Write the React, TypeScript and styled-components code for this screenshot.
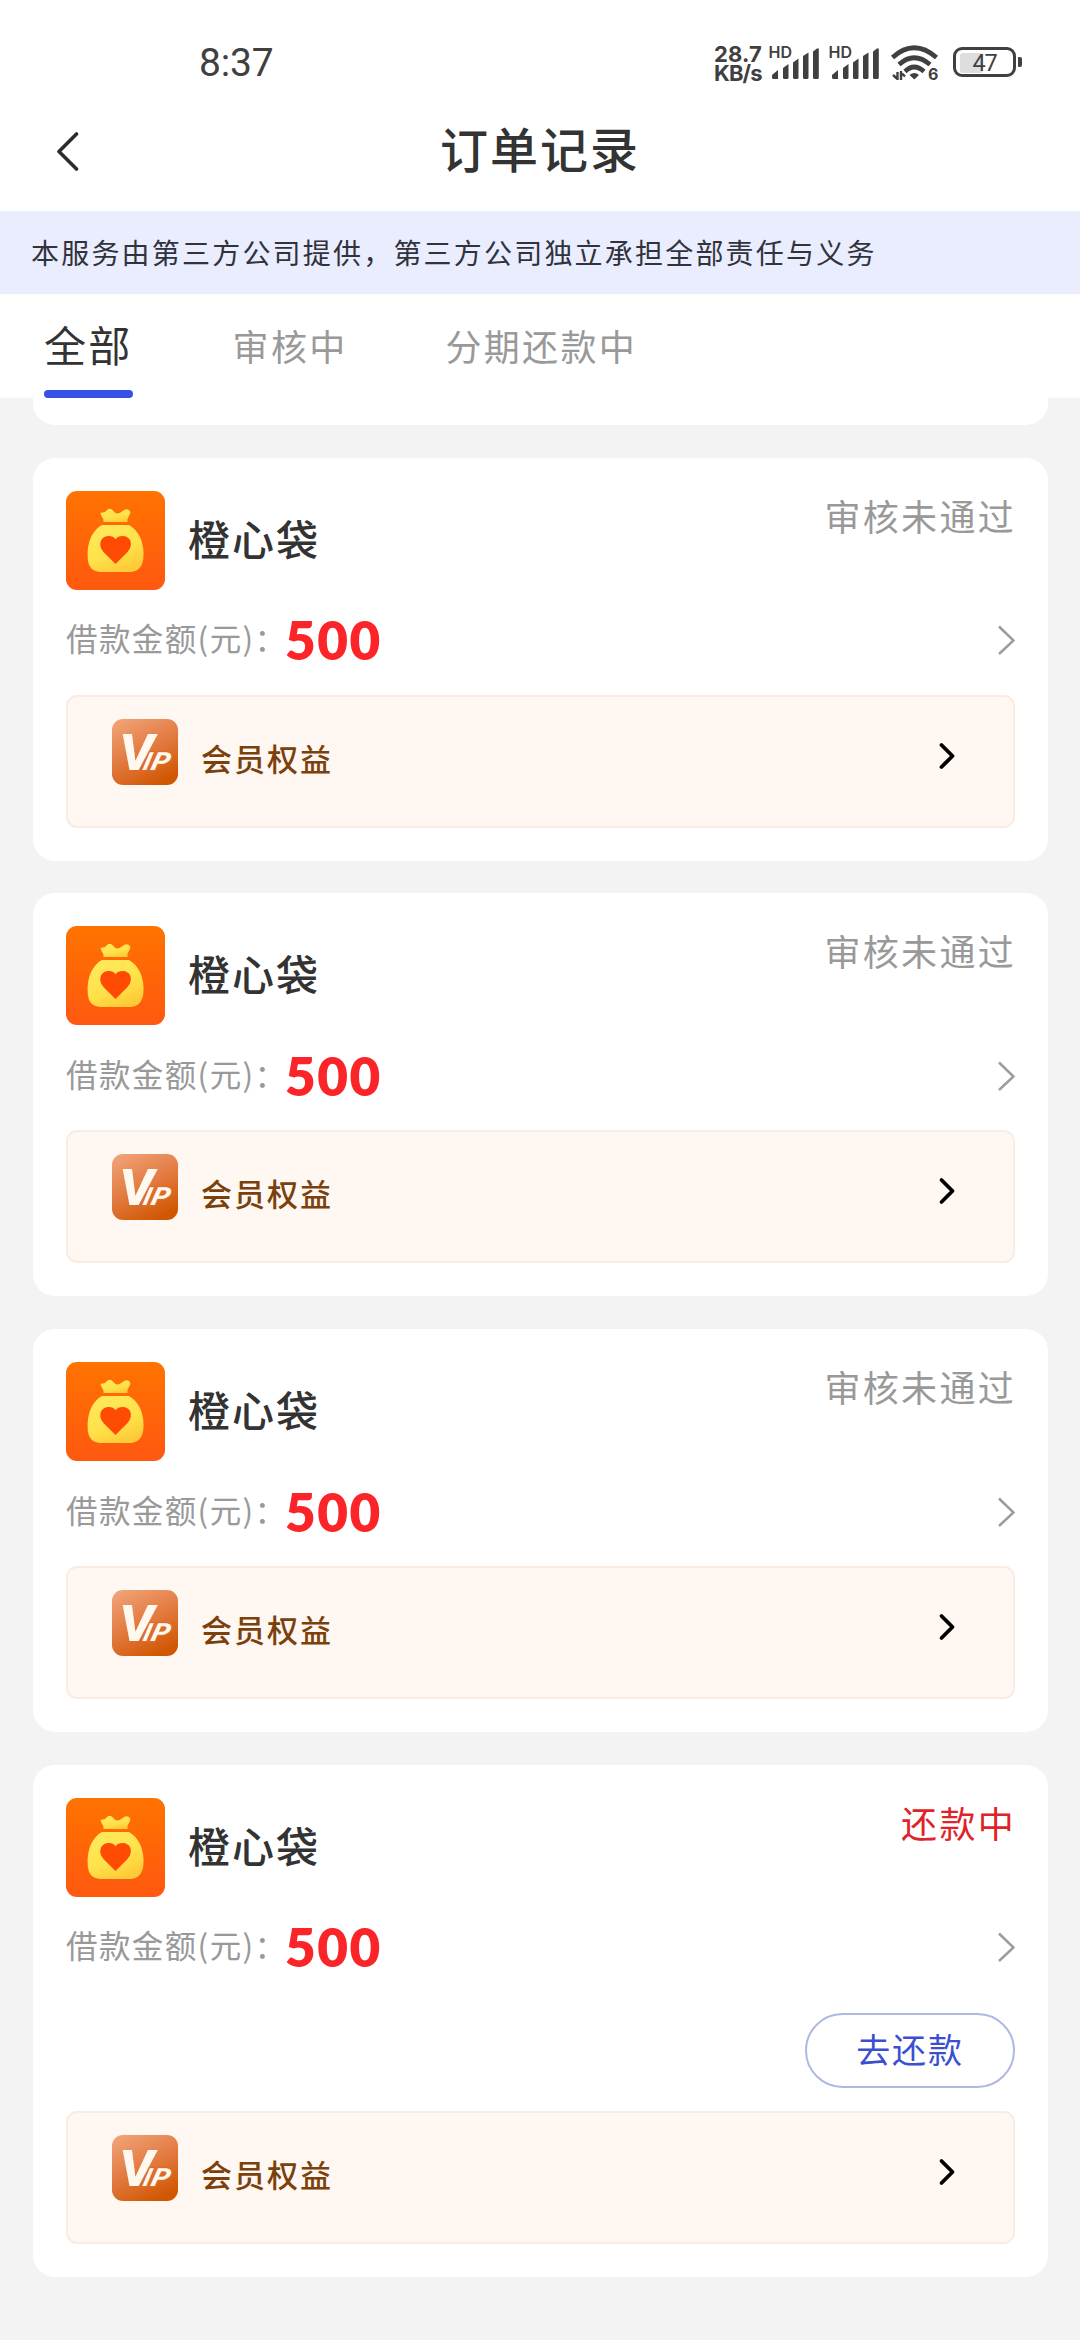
import React from "react";
import styled, { createGlobalStyle } from "styled-components";

const GlobalStyle = createGlobalStyle`
  * { box-sizing: border-box; }
  body {
    margin: 0;
    background: #f3f3f3;
    font-family: "Noto Sans CJK SC", "Noto Sans", sans-serif;
    color: #333;
  }
`;

const Page = styled.div`
  width: 1080px;
  height: 2340px;
  overflow: hidden;
  display: flex;
  flex-direction: column;
  background: #f3f3f3;
`;

const StatusBar = styled.div`
  height: 100px;
  padding: 24px 58px 0 199px;
  display: flex;
  align-items: center;
  justify-content: space-between;
  background: #fff;
  color: #404040;
`;

const Clock = styled.span`
  padding-top: 2px;
  font: 400 39px/46px Roboto, sans-serif;
  letter-spacing: -0.2px;
`;

const Indicators = styled.div`
  display: flex;
  align-items: center;
`;

const NetSpeed = styled.div`
  width: 55px;
  padding-top: 3px;
  font: 700 22px/19px Inter, sans-serif;
  white-space: nowrap;
`;

const SpeedLine = styled.div<{ $spacing: number }>`
  letter-spacing: ${(p) => p.$spacing}px;
`;

const Signal = styled.svg`
  width: 60px;
  height: 36px;
  overflow: visible;
`;

const Wifi = styled.svg`
  width: 50px;
  height: 36px;
  margin-left: 2px;
  overflow: visible;
`;

const Battery = styled.div`
  display: flex;
  align-items: center;
  margin-left: 12px;
`;

const BatteryShell = styled.div`
  width: 63px;
  height: 30px;
  border: 3px solid #404040;
  border-radius: 9px;
  padding: 2.5px 4px;
  display: grid;
`;

const BatteryCharge = styled.div`
  grid-area: 1 / 1;
  width: 23px;
  background: #dedede;
  border-radius: 3px;
`;

const BatteryText = styled.span`
  grid-area: 1 / 1;
  text-align: center;
  font: 400 23.5px/20px Roboto, sans-serif;
  letter-spacing: -1.2px;
`;

const BatteryNub = styled.div`
  width: 4px;
  height: 10px;
  margin-left: 2px;
  border-radius: 1px 2px 2px 1px;
  background: #404040;
`;

const NavBar = styled.header`
  height: 111px;
  padding: 0 54px 10px;
  display: grid;
  grid-template-columns: 80px 1fr 80px;
  align-items: center;
  background: #fff;
`;

const BackIcon = styled.svg`
  width: 28px;
  height: 40px;
`;

const NavTitle = styled.h1`
  margin: 0;
  padding-bottom: 8px;
  text-align: center;
  font-size: 48px;
  font-weight: 500;
  line-height: 60px;
  letter-spacing: 2px;
`;

const Notice = styled.div`
  height: 83px;
  padding: 0 31px;
  font-size: 28px;
  line-height: 82px;
  letter-spacing: 2.2px;
  white-space: nowrap;
  color: #30323c;
  background: #e9edfd;
`;

const Tabs = styled.nav`
  height: 104px;
  padding-left: 44px;
  display: flex;
  background: #fff;
`;

const Tab = styled.div<{ $active?: boolean }>`
  display: flex;
  flex-direction: column;
  justify-content: space-between;
  margin-right: ${(p) => (p.$active ? 100 : 98)}px;
  font-size: ${(p) => (p.$active ? 42 : 36)}px;
  line-height: ${(p) => (p.$active ? 99 : 102)}px;
  letter-spacing: 2.3px;
  color: ${(p) => (p.$active ? "#333" : "#999")};
  white-space: nowrap;
`;

const TabLabel = styled.span`
  height: 96px;
`;

const TabLine = styled.span`
  height: 8px;
  border-radius: 4px;
  background: #3551e6;
`;

const List = styled.main`
  padding: 0 32px 0 33px;
  display: flex;
  flex-direction: column;
  gap: 32.7px;
`;

const ScrolledCard = styled.div`
  height: 27px;
  border-radius: 0 0 22px 22px;
  background: #fff;
`;

const Card = styled.section`
  padding: 33px;
  border-radius: 22px;
  background: #fff;
  display: flex;
  flex-direction: column;
`;

const CardHead = styled.div`
  height: 99px;
  display: flex;
  align-items: center;
`;

const ProductLogo = styled.svg`
  width: 99px;
  height: 99px;
`;

const ProductName = styled.h2`
  margin: 0;
  padding: 0 0 5px 23px;
  flex: 1;
  font-size: 42px;
  font-weight: 500;
  line-height: 60px;
  letter-spacing: 2px;
`;

const Status = styled.span<{ $active?: boolean }>`
  align-self: flex-start;
  font-size: 36px;
  line-height: 48px;
  letter-spacing: 2.3px;
  margin-right: -1px;
  color: ${(p) => (p.$active ? "#e02229" : "#999")};
`;

const AmountRow = styled.div`
  height: 105px;
  padding-bottom: 4px;
  display: flex;
  align-items: center;
`;

const AmountLabel = styled.span`
  padding-bottom: 6px;
  font-size: 31.5px;
  line-height: 40px;
  letter-spacing: 1.4px;
  color: #999;
  width: 219px;
  white-space: nowrap;
`;

const Amount = styled.span`
  flex: 1;
  font: 800 53px/60px Lato, sans-serif;
  letter-spacing: 1.5px;
  color: #fb2428;
`;

const RowArrow = styled.svg`
  width: 18px;
  height: 30px;
`;

const Actions = styled.div`
  height: 109px;
  padding-top: 11px;
  display: flex;
  justify-content: flex-end;
  align-items: flex-start;
`;

const PayButton = styled.button`
  width: 210px;
  height: 75px;
  padding: 0 0 4px;
  border: 2px solid #aeb8e0;
  border-radius: 38px;
  background: #fff;
  color: #3a50cf;
  font: inherit;
  font-size: 34px;
  letter-spacing: 1.8px;
`;

const VipPanel = styled.div`
  height: 133px;
  padding: 22px 56px 0 44px;
  display: flex;
  align-items: flex-start;
  border: 2px solid #fbece3;
  border-radius: 11px;
  background: #fff7f1;
`;

const VipLogo = styled.svg`
  width: 66px;
  height: 66px;
`;

const VipLabel = styled.span`
  flex: 1;
  padding-left: 23px;
  font-size: 31px;
  font-weight: 500;
  line-height: 77px;
  letter-spacing: 2px;
  color: #7b410c;
`;

const VipArrow = styled.svg`
  width: 20px;
  height: 30px;
  margin-top: 22px;
`;

function SignalBars() {
  return (
    <Signal viewBox="0 0 60 36">
      <text x="-0.5" y="13.500" fontFamily="Inter" fontSize="16" fontWeight="600" fill="#404040">HD</text>
      <g fill="#404040">
        <path d="M3 33v-2l6-5v9H4q-1 0-1-2z" />
        <path d="M14 24l5.500-4v13.500q0 1.500-1.500 1.500h-2.500q-1.500 0-1.500-1.500z" />
        <path d="M24 18.500l5.500-4v19q0 1.500-1.500 1.500h-2.500q-1.500 0-1.500-1.500z" />
        <path d="M34 12l5.500-3.500v25q0 1.500-1.500 1.500h-2.500q-1.500 0-1.500-1.500z" />
        <path d="M44 7.500l4-3q1.800-1 1.800 1v28q0 1.500-1.500 1.500h-2.800q-1.500 0-1.500-1.500z" />
      </g>
    </Signal>
  );
}

function WifiSix() {
  return (
    <Wifi viewBox="0 0 50 36">
      <g fill="none" stroke="#404040" strokeWidth="4.700">
        <path d="M1.500 13.500Q23 -6 45.500 13.500" />
        <path d="M8 20.500Q23 7 39 20.500" />
        <path d="M14 27.500Q23 18.500 33 27.500" />
      </g>
      <path d="M18.500 31q5-4 9.500 0l-4.700 4.500z" fill="#404040" />
      <path d="M6.500 36v-8M6.500 35l-4.500-4M10 27v9M10 28.500l4 4" fill="none" stroke="#404040" strokeWidth="2.400" />
      <text x="37" y="36" fontFamily="Inter" fontSize="16" fontWeight="700" fill="#404040">6</text>
    </Wifi>
  );
}

function MoneyBag() {
  return (
    <ProductLogo viewBox="0 0 99 99">
      <defs>
        <linearGradient id="bagBack" x1="0" y1="0" x2="0" y2="1">
          <stop offset="0" stopColor="#ff7300" />
          <stop offset="1" stopColor="#ff5810" />
        </linearGradient>
        <linearGradient id="bagFill" x1="0.1" y1="0" x2="0.6" y2="1">
          <stop offset="0" stopColor="#ffe95c" />
          <stop offset="0.6" stopColor="#ffe24a" />
          <stop offset="1" stopColor="#fecb38" />
        </linearGradient>
      </defs>
      <rect width="99" height="99" rx="11" fill="url(#bagBack)" />
      <path
        d="M37.500 31V28.500L34.800 23.500Q34 21 37 21.500Q39 21.500 41 19Q44 16.500 47 19.500Q50 24 54 21.800L58.500 18.800Q62 17.500 64 20Q65 22 63.500 24L61.500 28V31Z"
        fill="url(#bagFill)"
      />
      <path
        d="M36 34H63Q69 37 74 46Q78.500 56 77.300 68Q75.500 80.500 64 81H34Q23 80 21.800 69Q20.500 55 25.500 45Q30 37 36 34Z"
        fill="url(#bagFill)"
      />
      <path
        d="M49.500 73L37.500 61Q32.500 55.500 35 49.500Q37.500 44.800 43 45Q47 45 49.500 48.200Q52 45 56.500 45Q62 45 64.300 49.500Q66.500 55.500 61.500 61Z"
        fill="#ff4a04"
      />
    </ProductLogo>
  );
}

function VipBadge() {
  return (
    <VipLogo viewBox="0 0 66 66">
      <defs>
        <linearGradient id="vipBack" x1="0.2" y1="0" x2="0.7" y2="1">
          <stop offset="0" stopColor="#f0a074" />
          <stop offset="0.5" stopColor="#e27a40" />
          <stop offset="1" stopColor="#d05600" />
        </linearGradient>
      </defs>
      <rect width="66" height="66" rx="11" fill="url(#vipBack)" />
      <g fill="#fff8ee" fontFamily="Roboto" fontStyle="italic">
        <text x="7" y="51" fontSize="50" fontWeight="800" textLength="35" lengthAdjust="spacingAndGlyphs">V</text>
        <g stroke="#dc6c2c" strokeWidth="2.500" style={{ paintOrder: "stroke" }}>
          <text x="0" y="0" fontSize="25" fontWeight="800" transform="translate(30 51) skewX(-14)">I</text>
          <text x="0" y="0" fontSize="25" fontWeight="800" textLength="18" lengthAdjust="spacingAndGlyphs" transform="translate(38 51) skewX(-14)">P</text>
        </g>
      </g>
    </VipLogo>
  );
}

function OrderCard({ status, repaying }: { status: string; repaying?: boolean }) {
  return (
    <Card>
      <CardHead>
        <MoneyBag />
        <ProductName>橙心袋</ProductName>
        <Status $active={repaying}>{status}</Status>
      </CardHead>
      <AmountRow>
        <AmountLabel>借款金额(元)：</AmountLabel>
        <Amount>500</Amount>
        <RowArrow viewBox="0 0 18 30" fill="none" stroke="#9c9c9c" strokeWidth="2.500">
          <path d="M2 1.500L16.500 15.500L2 29" />
        </RowArrow>
      </AmountRow>
      {repaying && (
        <Actions>
          <PayButton>去还款</PayButton>
        </Actions>
      )}
      <VipPanel>
        <VipBadge />
        <VipLabel>会员权益</VipLabel>
        <VipArrow viewBox="0 0 20 30" fill="none" stroke="#000" strokeWidth="3.800" strokeLinecap="round" strokeLinejoin="round">
          <path d="M4.500 4L15.500 15L4.500 26" />
        </VipArrow>
      </VipPanel>
    </Card>
  );
}

export default function App() {
  return (
    <Page>
      <GlobalStyle />
      <StatusBar>
        <Clock>8:37</Clock>
        <Indicators>
          <NetSpeed>
            <SpeedLine $spacing={0.2}>28.7</SpeedLine>
            <SpeedLine $spacing={-0.9}>KB/s</SpeedLine>
          </NetSpeed>
          <SignalBars />
          <SignalBars />
          <WifiSix />
          <Battery>
            <BatteryShell>
              <BatteryCharge />
              <BatteryText>47</BatteryText>
            </BatteryShell>
            <BatteryNub />
          </Battery>
        </Indicators>
      </StatusBar>
      <NavBar>
        <BackIcon viewBox="0 0 28 40" fill="none" stroke="#2c2c2c" strokeWidth="3.600" strokeLinecap="round" strokeLinejoin="round">
          <path d="M22.500 3L5 20.500L22.500 38" />
        </BackIcon>
        <NavTitle>订单记录</NavTitle>
      </NavBar>
      <Notice>本服务由第三方公司提供，第三方公司独立承担全部责任与义务</Notice>
      <Tabs>
        <Tab $active>
          <TabLabel>全部</TabLabel>
          <TabLine />
        </Tab>
        <Tab>
          <TabLabel>审核中</TabLabel>
        </Tab>
        <Tab>
          <TabLabel>分期还款中</TabLabel>
        </Tab>
      </Tabs>
      <List>
        <ScrolledCard />
        <OrderCard status="审核未通过" />
        <OrderCard status="审核未通过" />
        <OrderCard status="审核未通过" />
        <OrderCard status="还款中" repaying />
      </List>
    </Page>
  );
}
